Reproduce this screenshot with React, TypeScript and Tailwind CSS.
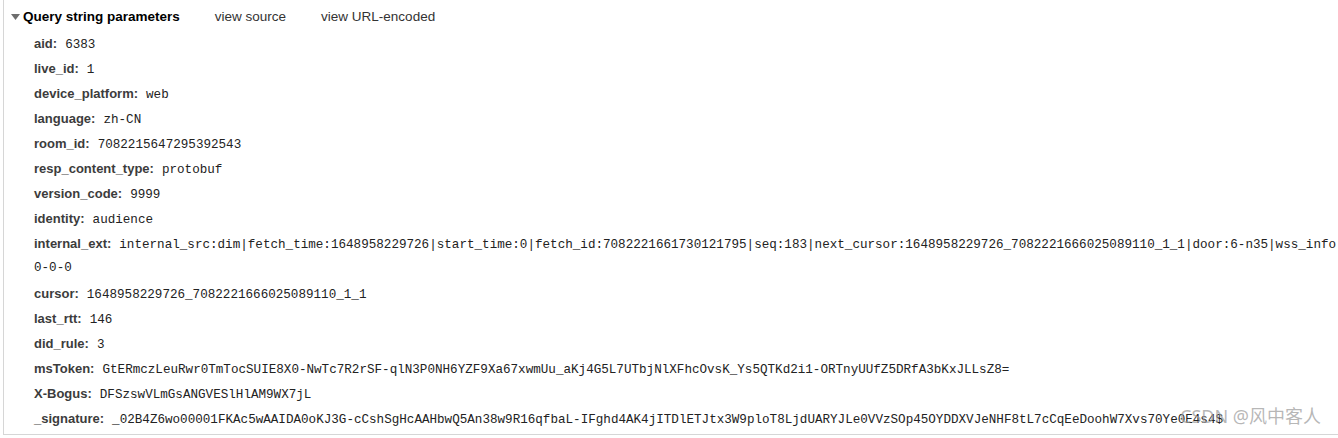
import React from "react";

const params: { name: string; value: string }[] = [
	{ name: "aid", value: "6383" },
	{ name: "live_id", value: "1" },
	{ name: "device_platform", value: "web" },
	{ name: "language", value: "zh-CN" },
	{ name: "room_id", value: "7082215647295392543" },
	{ name: "resp_content_type", value: "protobuf" },
	{ name: "version_code", value: "9999" },
	{ name: "identity", value: "audience" },
];

const params2: { name: string; value: string }[] = [
	{ name: "cursor", value: "1648958229726_7082221666025089110_1_1" },
	{ name: "last_rtt", value: "146" },
	{ name: "did_rule", value: "3" },
	{
		name: "msToken",
		value:
			"GtERmczLeuRwr0TmTocSUIE8X0-NwTc7R2rSF-qlN3P0NH6YZF9Xa67xwmUu_aKj4G5L7UTbjNlXFhcOvsK_Ys5QTKd2i1-ORTnyUUfZ5DRfA3bKxJLLsZ8=",
	},
	{ name: "X-Bogus", value: "DFSzswVLmGsANGVESlHlAM9WX7jL" },
	{
		name: "_signature",
		value:
			"_02B4Z6wo00001FKAc5wAAIDA0oKJ3G-cCshSgHcAAHbwQ5An38w9R16qfbaL-IFghd4AK4jITDlETJtx3W9ploT8LjdUARYJLe0VVzSOp45OYDDXVJeNHF8tL7cCqEeDoohW7Xvs70Ye0E4s4$",
	},
];

const sans = "font-['Liberation_Sans',Arial,sans-serif]";
const mono = "font-['Liberation_Mono','DejaVu_Sans_Mono',monospace]";

function Row({ name, value }: { name: string; value: string }) {
	return (
		<div className="h-[25px] leading-[25px] flex items-baseline whitespace-nowrap pl-[30px]">
			<span className={`${sans} text-[13px] font-bold text-[#3c3c3c]`}>{name}:</span>
			<span className={`${mono} text-[12.6px] text-[#222] ml-[8px]`}>{value}</span>
		</div>
	);
}

export default function App() {
	return (
		<div className="relative w-[1338px] h-[438px] overflow-hidden bg-white">
			<div className="ml-[3px] w-[1335px] h-[435px] border-l border-b border-[#d6d6d6] pt-[5px]">
				<div className="h-[25px] flex items-center whitespace-nowrap">
					<span className="ml-[7px] w-[12px] flex items-center">
						<svg width="9" height="7" viewBox="0 0 9 7">
							<path d="M0 0 L9 0 L4.5 6 Z" fill="#6e6e6e" />
						</svg>
					</span>
					<span className={`${sans} text-[13.5px] font-bold text-black`}>Query string parameters</span>
					<span className={`${sans} text-[13.5px] text-[#333] ml-[35px]`}>view source</span>
					<span className={`${sans} text-[13.5px] text-[#333] ml-[35px]`}>view URL-encoded</span>
				</div>
				<div className="mt-[1px]">
					{params.map((p) => (
						<Row key={p.name} name={p.name} value={p.value} />
					))}
					<div className="whitespace-nowrap pl-[30px]">
						<div className="h-[25px] leading-[25px] flex items-baseline">
							<span className={`${sans} text-[13px] font-bold text-[#3c3c3c]`}>internal_ext:</span>
							<span className={`${mono} text-[12.6px] text-[#222] ml-[8px]`}>
								internal_src:dim|fetch_time:1648958229726|start_time:0|fetch_id:7082221661730121795|seq:183|next_cursor:1648958229726_7082221666025089110_1_1|door:6-n35|wss_info:0-0-0-0-0
							</span>
						</div>
						<div className={`h-[25px] leading-[25px] ${mono} text-[12.6px] text-[#222]`}>0-0-0</div>
					</div>
					{params2.map((p) => (
						<Row key={p.name} name={p.name} value={p.value} />
					))}
				</div>
			</div>
			<div className="absolute left-[1180px] top-[403px] font-['Noto_Sans','Noto_Sans_CJK_SC',sans-serif] text-[18px] leading-[26px] text-[#a0a0a0]/75 whitespace-nowrap">
				CSDN @风中客人
			</div>
		</div>
	);
}
